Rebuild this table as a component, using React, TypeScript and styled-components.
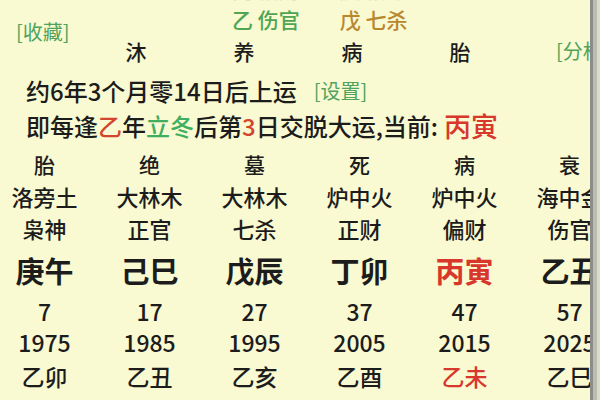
import React from "react";
import styled, { createGlobalStyle } from "styled-components";

const GlobalStyle = createGlobalStyle`
  html, body { margin: 0; padding: 0; background: #f9f9d2; }
  body { font-family: "Noto Sans CJK SC", "Noto Sans", sans-serif; color: #1c1c1c; }
`;

const Screen = styled.div`
  width: 600px;
  height: 400px;
  display: flex;
  overflow: hidden;
  background: #f9f9d2;
`;

const Panel = styled.div`
  width: 590px;
  height: 400px;
  overflow: hidden;
  display: flex;
  flex-direction: column;
  flex: none;
  font-weight: 500;
`;

const Scrollbar = styled.div`
  flex: 1;
  border-left: 3px solid #8c8c88;
  background: linear-gradient(to right, #bcbcb6 0, #bcbcb6 4px, #dcdcc8 4px);
`;

const Header = styled.div`
  display: grid;
  grid-template-columns: 82px repeat(4, 108px) 1fr;
  grid-template-rows: 26px 34px 30px;
  margin-top: -24px;
`;

const ShishenRow = styled.div<{ $row: number }>`
  grid-column: 2 / 7;
  grid-row: ${(p) => p.$row};
  display: flex;
  align-items: center;
  gap: 40px;
  padding-left: 150px;
  font-size: 21px;
  white-space: nowrap;
`;

const Shishen = styled.span<{ $tone: "green" | "brown" | "faint" }>`
  color: ${(p) =>
    p.$tone === "green" ? "#4ea553" : p.$tone === "brown" ? "#b8872f" : "#e2e2c8"};
`;

const LinkLabel = styled.span`
  color: #4fa35d;
  font-size: 20px;
  font-weight: 400;
  line-height: 22px;
  white-space: nowrap;
`;

const Collect = styled(LinkLabel)`
  grid-column: 1;
  grid-row: 2 / 4;
  align-self: start;
  margin-top: 19px;
  margin-left: 16px;
`;

const Analyze = styled(LinkLabel)`
  grid-column: 6;
  grid-row: 3;
  align-self: center;
  margin-left: 42px;
`;

const StageTop = styled.span<{ $col: number }>`
  grid-column: ${(p) => p.$col};
  grid-row: 3;
  align-self: center;
  text-align: center;
  font-size: 21px;
  line-height: 30px;
`;

const TextLine = styled.div`
  display: flex;
  align-items: center;
  height: 35px;
  padding-left: 26px;
  font-size: 24px;
  white-space: nowrap;
`;

const FirstLine = styled(TextLine)`
  margin-top: 7px;
`;

const Setting = styled(LinkLabel)`
  margin-left: 17px;
`;

const Mark = styled.span<{ $tone: "red" | "green" }>`
  color: ${(p) => (p.$tone === "red" ? "#d2452e" : "#3fae5f")};
`;

const Current = styled.span`
  color: #d8372c;
  font-size: 27px;
  margin-left: 6px;
`;

const Grid = styled.div`
  display: grid;
  grid-template-columns: repeat(6, 105px);
  margin-left: -8px;
  margin-top: 6px;
`;

type Kind = "stage" | "nayin" | "god" | "pillar" | "age" | "year" | "liunian";

const heights: Record<Kind, number> = {
  stage: 31,
  nayin: 32,
  god: 32,
  pillar: 53,
  age: 29,
  year: 33,
  liunian: 35,
};

const sizes: Record<Kind, number> = {
  stage: 21,
  nayin: 22,
  god: 22,
  pillar: 29,
  age: 23,
  year: 23,
  liunian: 23,
};

const Cell = styled.div<{ $kind: Kind; $red?: boolean }>`
  height: ${(p) => heights[p.$kind]}px;
  line-height: ${(p) => heights[p.$kind]}px;
  font-size: ${(p) => sizes[p.$kind]}px;
  font-weight: ${(p) => (p.$kind === "pillar" ? 700 : 500)};
  color: ${(p) => (p.$red ? "#d8372c" : "#1c1c1c")};
  text-align: center;
  white-space: nowrap;
`;

const columns = [
  { stage: "胎", nayin: "洛旁土", god: "枭神", pillar: "庚午", age: "7", year: "1975", liunian: "乙卯" },
  { stage: "绝", nayin: "大林木", god: "正官", pillar: "己巳", age: "17", year: "1985", liunian: "乙丑" },
  { stage: "墓", nayin: "大林木", god: "七杀", pillar: "戊辰", age: "27", year: "1995", liunian: "乙亥" },
  { stage: "死", nayin: "炉中火", god: "正财", pillar: "丁卯", age: "37", year: "2005", liunian: "乙酉" },
  { stage: "病", nayin: "炉中火", god: "偏财", pillar: "丙寅", age: "47", year: "2015", liunian: "乙未", current: true },
  { stage: "衰", nayin: "海中金", god: "伤官", pillar: "乙丑", age: "57", year: "2025", liunian: "乙巳" },
];

const rowKinds: Kind[] = ["stage", "nayin", "god", "pillar", "age", "year", "liunian"];

export default function App() {
  return (
    <>
      <GlobalStyle />
      <Screen>
        <Panel>
          <Header>
            <ShishenRow $row={1}>
              <Shishen $tone="faint">丙 偏财</Shishen>
              <Shishen $tone="faint">庚 偏印</Shishen>
            </ShishenRow>
            <ShishenRow $row={2}>
              <Shishen $tone="green">乙 伤官</Shishen>
              <Shishen $tone="brown">戊 七杀</Shishen>
            </ShishenRow>
            <Collect>[收藏]</Collect>
            <StageTop $col={2}>沐</StageTop>
            <StageTop $col={3}>养</StageTop>
            <StageTop $col={4}>病</StageTop>
            <StageTop $col={5}>胎</StageTop>
            <Analyze>[分析]</Analyze>
          </Header>
          <FirstLine>
            约6年3个月零14日后上运
            <Setting>[设置]</Setting>
          </FirstLine>
          <TextLine>
            即每逢<Mark $tone="red">乙</Mark>年<Mark $tone="green">立冬</Mark>后第
            <Mark $tone="red">3</Mark>日交脱大运,当前:
            <Current>丙寅</Current>
          </TextLine>
          <Grid>
            {rowKinds.map((kind) =>
              columns.map((c, i) => (
                <Cell
                  key={kind + i}
                  $kind={kind}
                  $red={c.current && (kind === "pillar" || kind === "liunian")}
                >
                  {c[kind]}
                </Cell>
              ))
            )}
          </Grid>
        </Panel>
        <Scrollbar />
      </Screen>
    </>
  );
}
